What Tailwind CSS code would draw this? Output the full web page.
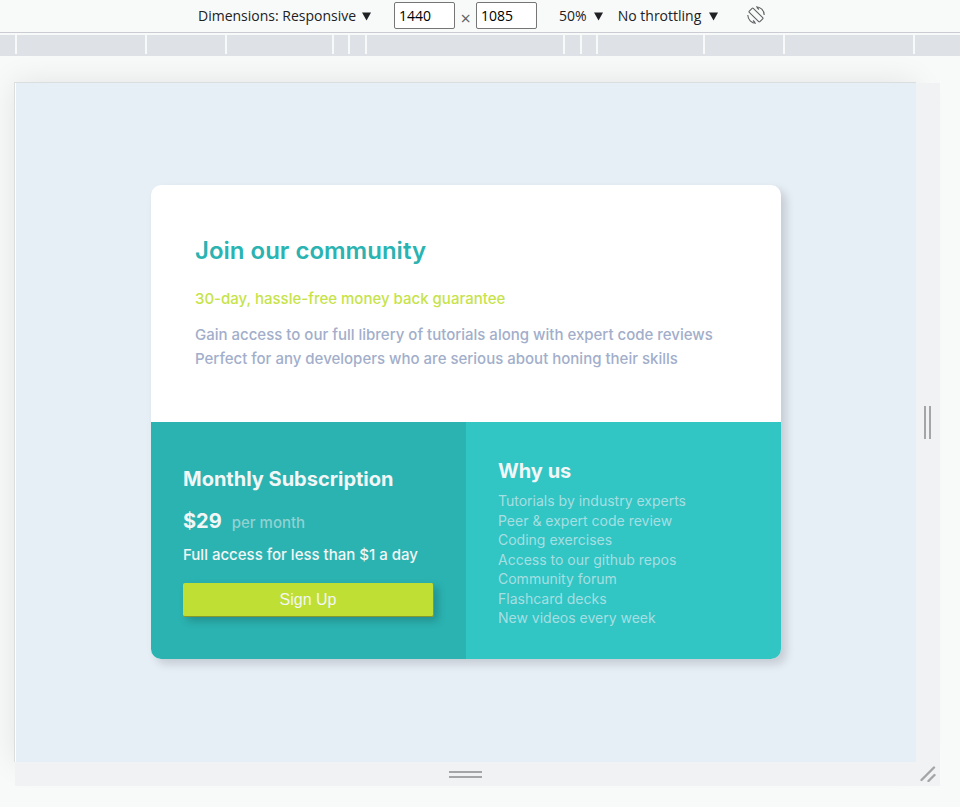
<!DOCTYPE html>
<html lang="en">
<head>
<meta charset="utf-8">
<meta name="viewport" content="width=device-width, initial-scale=1">
<title>Join our community</title>
<script src="https://cdn.jsdelivr.net/npm/@tailwindcss/browser@4"></script>
</head>
<body class="min-h-screen bg-[#f8faf9] font-['Open_Sans','Noto_Sans',sans-serif] text-[#202124]">
<header class="relative z-10 bg-[#f8faf9]">
  <div class="flex h-8 items-center pl-[198px] text-sm">
    <button type="button" class="flex items-center gap-1.5">Dimensions: Responsive
      <svg class="size-[9px]" viewBox="0 0 9 8" aria-hidden="true"><path d="M0 0H9L4.500 8Z" fill="currentColor"/></svg></button>
    <input aria-label="Width" value="1440" class="ml-[23px] mb-0.5 h-[27px] w-[61px] rounded-xs border border-[#767676] bg-white px-1 text-black">
    <span class="w-[21px] pt-1 text-center text-lg leading-5 text-[#5f6368]">×</span>
    <input aria-label="Height" value="1085" class="mb-0.5 h-[27px] w-[61px] rounded-xs border border-[#767676] bg-white px-1 text-black">
    <button type="button" class="ml-[22px] flex items-center gap-[7px]">50%
      <svg class="size-[9px]" viewBox="0 0 9 8" aria-hidden="true"><path d="M0 0H9L4.500 8Z" fill="currentColor"/></svg></button>
    <button type="button" class="ml-[15px] flex items-center gap-2">No throttling
      <svg class="size-[9px]" viewBox="0 0 9 8" aria-hidden="true"><path d="M0 0H9L4.500 8Z" fill="currentColor"/></svg></button>
    <button type="button" aria-label="Rotate" class="mb-0.5 ml-[29px]">
      <svg class="size-[18px]" viewBox="0 0 18 18" fill="none" stroke="#5f6164" stroke-width="1.100" aria-hidden="true">
        <path d="M6.300 2.300 15.700 11.700Q16.300 12.300 15.700 12.900L12.900 15.700Q12.300 16.300 11.700 15.700L2.300 6.300Q1.700 5.700 2.300 5.100L5.100 2.300Q5.700 1.700 6.300 2.300Z"/>
        <path d="M9 .8A8.200 8.200 0 0 1 17.200 9M10 1.500 12 3.500M9 17.200A8.200 8.200 0 0 1 .8 9M8 16.500 6 14.500"/>
      </svg></button>
  </div>
  <div class="h-[3px] border-t border-[#caccd4]"></div>
  <div class="flex h-[21px] bg-[#dee1e6] pb-0.5" aria-hidden="true">
    <i class="w-[17px] border-r-2 border-[#f8faf9]"></i>
    <i class="w-[130px] border-r-2 border-[#f8faf9]"></i>
    <i class="w-20 border-r-2 border-[#f8faf9]"></i>
    <i class="w-[107px] border-r-2 border-[#f8faf9]"></i>
    <i class="w-4 border-r-2 border-[#f8faf9]"></i>
    <i class="w-[17px] border-r-2 border-[#f8faf9]"></i>
    <i class="w-[198px] border-r-2 border-[#f8faf9]"></i>
    <i class="w-[17px] border-r-2 border-[#f8faf9]"></i>
    <i class="w-4 border-r-2 border-[#f8faf9]"></i>
    <i class="w-[107px] border-r-2 border-[#f8faf9]"></i>
    <i class="w-20 border-r-2 border-[#f8faf9]"></i>
    <i class="w-[130px] border-r-2 border-[#f8faf9]"></i>
  </div>
</header>

<div class="mt-[26px] mr-5 mb-5 ml-[14px] grid grid-cols-[1fr_24px] grid-rows-[auto_24px]">
  <main class="border-t border-l border-[#dcdddd] bg-[#e6eef6] font-['Inter',sans-serif] shadow-[0_0_30px_rgba(0,0,0,0.09)]">
    <div class="flex justify-center border-l border-white pt-[102px] pb-[103px]">
    <article class="w-[70%] overflow-hidden rounded-[10px] bg-white shadow-[5px_5px_10px_rgba(0,0,0,0.15)]">
      <section class="h-[237px] px-11 pt-[50px]">
        <h1 class="text-2xl leading-8 font-semibold text-[#2bb3b1]">Join our community</h1>
        <p class="mt-5 text-[15px] leading-6 font-medium text-[#c6e34a]">30-day, hassle-free money back guarantee</p>
        <p class="mt-3 text-[15px] leading-6 font-medium whitespace-nowrap text-[#a2aeca]">Gain access to our full librery of tutorials along with expert code reviews<br>Perfect for any developers who are serious about honing their skills</p>
      </section>
      <div class="grid grid-cols-2">
        <section class="h-[237px] bg-[#2bb3b1] px-8 pt-[41px] text-[#f3f6f6]">
          <h2 class="text-xl leading-8 font-bold">Monthly Subscription</h2>
          <p class="mt-2.5 flex items-baseline gap-2.5 leading-8"><strong class="text-xl leading-8 font-bold">$29</strong><span class="text-[15px] font-medium text-[#8fd2d3]">per month</span></p>
          <p class="mt-1 text-[15px] leading-6 font-medium">Full access for less than $1 a day</p>
          <button type="button" class="mt-4 h-[34px] w-full rounded-xs border-r border-b border-[#85992c] bg-[#bfdf34] font-['Liberation_Sans',sans-serif] text-base shadow-[4px_4px_8px_rgba(0,0,0,0.2)]">Sign Up</button>
        </section>
        <section class="h-[237px] bg-[#31c5c4] px-8 pt-[33px] text-[#f3f6f6]">
          <h2 class="text-xl leading-8 font-bold">Why us</h2>
          <ul class="mt-1 flex h-[136px] flex-col justify-between text-sm leading-[19px] text-[#a6dfe2]">
            <li>Tutorials by industry experts</li>
            <li>Peer &amp; expert code review</li>
            <li>Coding exercises</li>
            <li>Access to our github repos</li>
            <li>Community forum</li>
            <li>Flashcard decks</li>
            <li>New videos every week</li>
          </ul>
        </section>
      </div>
    </article>
    </div>
  </main>
  <div class="mt-px flex items-center justify-center bg-[#f1f2f4] pr-0.5">
    <div class="h-[33px] w-[7px] border-x-2 border-[#a4a5a6]"></div>
  </div>
  <div class="ml-px flex items-center justify-center bg-[#f1f2f4]">
    <div class="h-[7px] w-[33px] border-y-2 border-[#a4a5a6]"></div>
  </div>
  <div class="flex items-center justify-center bg-[#f1f2f4]">
    <svg class="size-4" viewBox="0 0 16 16" stroke="#a4a5a6" stroke-width="2.400" stroke-linecap="round" aria-hidden="true"><path d="M1.500 14 14 1.500M8.500 15 14.500 9"/></svg>
  </div>
</div>
</body>
</html>
